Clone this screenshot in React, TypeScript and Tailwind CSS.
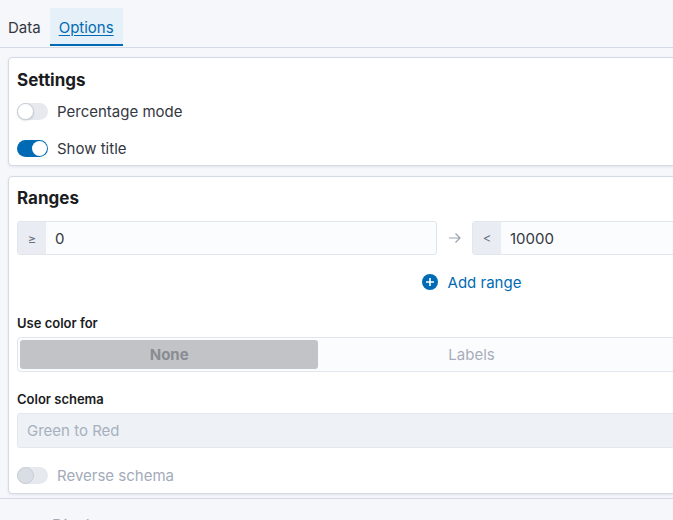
import React from 'react';

function Toggle({ on, disabled }: { on?: boolean; disabled?: boolean }) {
  if (disabled) {
    return (
      <span className="relative inline-block w-[31px] h-[17px] rounded-full bg-[#e6e9ee] shrink-0">
        <span className="absolute left-0 top-0 w-[17px] h-[17px] rounded-full bg-[#d9dde4] border border-[#c9ced6]" />
      </span>
    );
  }
  return on ? (
    <span className="relative inline-block w-[31px] h-[17px] rounded-full bg-[#006bb4] shrink-0">
      <span className="absolute right-[1px] top-[1px] w-[15px] h-[15px] rounded-full bg-white" />
    </span>
  ) : (
    <span className="relative inline-block w-[31px] h-[17px] rounded-full bg-[#e6e9ee] shrink-0">
      <span className="absolute left-0 top-0 w-[17px] h-[17px] rounded-full bg-white border border-[#c5cad3] shadow-[0_1px_2px_rgba(0,0,0,0.12)]" />
    </span>
  );
}

function RangeInput({ sign, value }: { sign: string; value: string }) {
  return (
    <div className="flex h-[34px] w-[420px] border border-[#e0e5ee] rounded-[3px] bg-[#fbfcfd] overflow-hidden">
      <div className="w-[28px] bg-[#e9edf3] flex items-center justify-center pt-[1px] text-[13px] text-[#69707d]">
        {sign}
      </div>
      <div className="flex items-center pl-[9px] pt-[2px] text-[15px] text-[#343741]">{value}</div>
    </div>
  );
}

export default function App() {
  return (
    <div className="w-[673px] h-[520px] overflow-hidden bg-[#f5f7fa] font-['Inter','Noto_Sans',sans-serif] text-[#343741]">
      <div className="w-[943px]">
        {/* tabs */}
        <div className="h-[48px] border-b border-[#d3dae6] pt-[8px] flex">
          <div className="h-[38px] pl-[8px] pr-[9px] pt-[2px] flex items-center text-[15px] text-[#343741]">Data</div>
          <div className="h-[38px] px-[9px] pt-[4px] flex items-center text-[15px] text-[#006bb4] underline underline-offset-2 bg-[#e6f0f8] border-b-2 border-[#006bb4]">
            Options
          </div>
        </div>

        <div className="px-[8px] pt-[9px]">
          {/* Settings */}
          <div className="h-[109px] bg-white border border-[#d3dae6] rounded-[4px] shadow-[0_1px_3px_rgba(0,0,0,0.08)] px-[8px] pt-[8px]">
            <div className="mt-[2px] text-[17px] leading-[24px] font-bold text-[#1a1c21]">Settings</div>
            <div className="mt-[9px] h-[20px] flex items-center gap-[9px] text-[15px]">
              <Toggle />
              <span className="pt-[2px]">Percentage mode</span>
            </div>
            <div className="mt-[17px] h-[20px] flex items-center gap-[9px] text-[15px]">
              <Toggle on />
              <span className="pt-[2px]">Show title</span>
            </div>
          </div>

          {/* Ranges */}
          <div className="mt-[10px] h-[318px] bg-white border border-[#d3dae6] rounded-[4px] shadow-[0_1px_3px_rgba(0,0,0,0.08)] px-[8px] pt-[8px]">
            <div className="mt-[1px] text-[17px] leading-[24px] font-bold text-[#1a1c21]">Ranges</div>
            <div className="mt-[11px] flex items-center">
              <RangeInput sign="≥" value="0" />
              <div className="w-[35px] flex justify-center">
                <svg width="16" height="16" viewBox="0 0 16 16" fill="none" stroke="#98a2b3" strokeWidth="1.2">
                  <path d="M2 8h11.5M8.5 3.5 13 8l-4.5 4.5" />
                </svg>
              </div>
              <RangeInput sign="<" value="10000" />
            </div>
            <div className="mt-[15px] h-[24px] flex items-center justify-center gap-[10px] text-[15px] text-[#006bb4]">
              <svg width="16" height="16" viewBox="0 0 16 16">
                <circle cx="8" cy="8" r="8" fill="#006bb4" />
                <path d="M8 4v8M4 8h8" stroke="white" strokeWidth="1.6" />
              </svg>
              <span className="pt-[2px]">Add range</span>
            </div>

            <div className="mt-[21px] text-[13px] leading-[16px] font-semibold text-[#1a1c21]">Use color for</div>
            <div className="mt-[6px] h-[35px] border border-[#e0e5ee] rounded-[4px] bg-[#fbfcfd] p-[2px] grid grid-cols-3 gap-[4px] text-[15px]">
              <div className="rounded-[3px] bg-[#c2c3c7] flex items-center justify-center pt-[2px] font-bold text-[#898c92]">None</div>
              <div className="flex items-center justify-center pt-[2px] text-[#a7aebb]">Labels</div>
              <div className="flex items-center justify-center pt-[2px] text-[#a7aebb]">Background</div>
            </div>

            <div className="mt-[19px] text-[13px] leading-[16px] font-semibold text-[#1a1c21]">Color schema</div>
            <div className="mt-[6px] h-[35px] border border-[#e3e8f0] rounded-[3px] bg-[#eef2f7] flex items-center pl-[9px] pt-[2px] text-[15px] text-[#a7b0bd]">
              Green to Red
            </div>

            <div className="mt-[17px] h-[20px] flex items-center gap-[9px] text-[15px] text-[#a2abba]">
              <Toggle disabled />
              <span className="pt-[2px]">Reverse schema</span>
            </div>
          </div>
        </div>

        {/* next section, cut off */}
        <div className="mt-[4px] border-t border-[#d3dae6] pt-[14px] pl-[18px] flex items-center gap-[10px] text-[16px] text-[#a2abba]">
          <span className="text-[12px]">⋮⋮</span>
          <span>Display</span>
        </div>
      </div>
    </div>
  );
}
